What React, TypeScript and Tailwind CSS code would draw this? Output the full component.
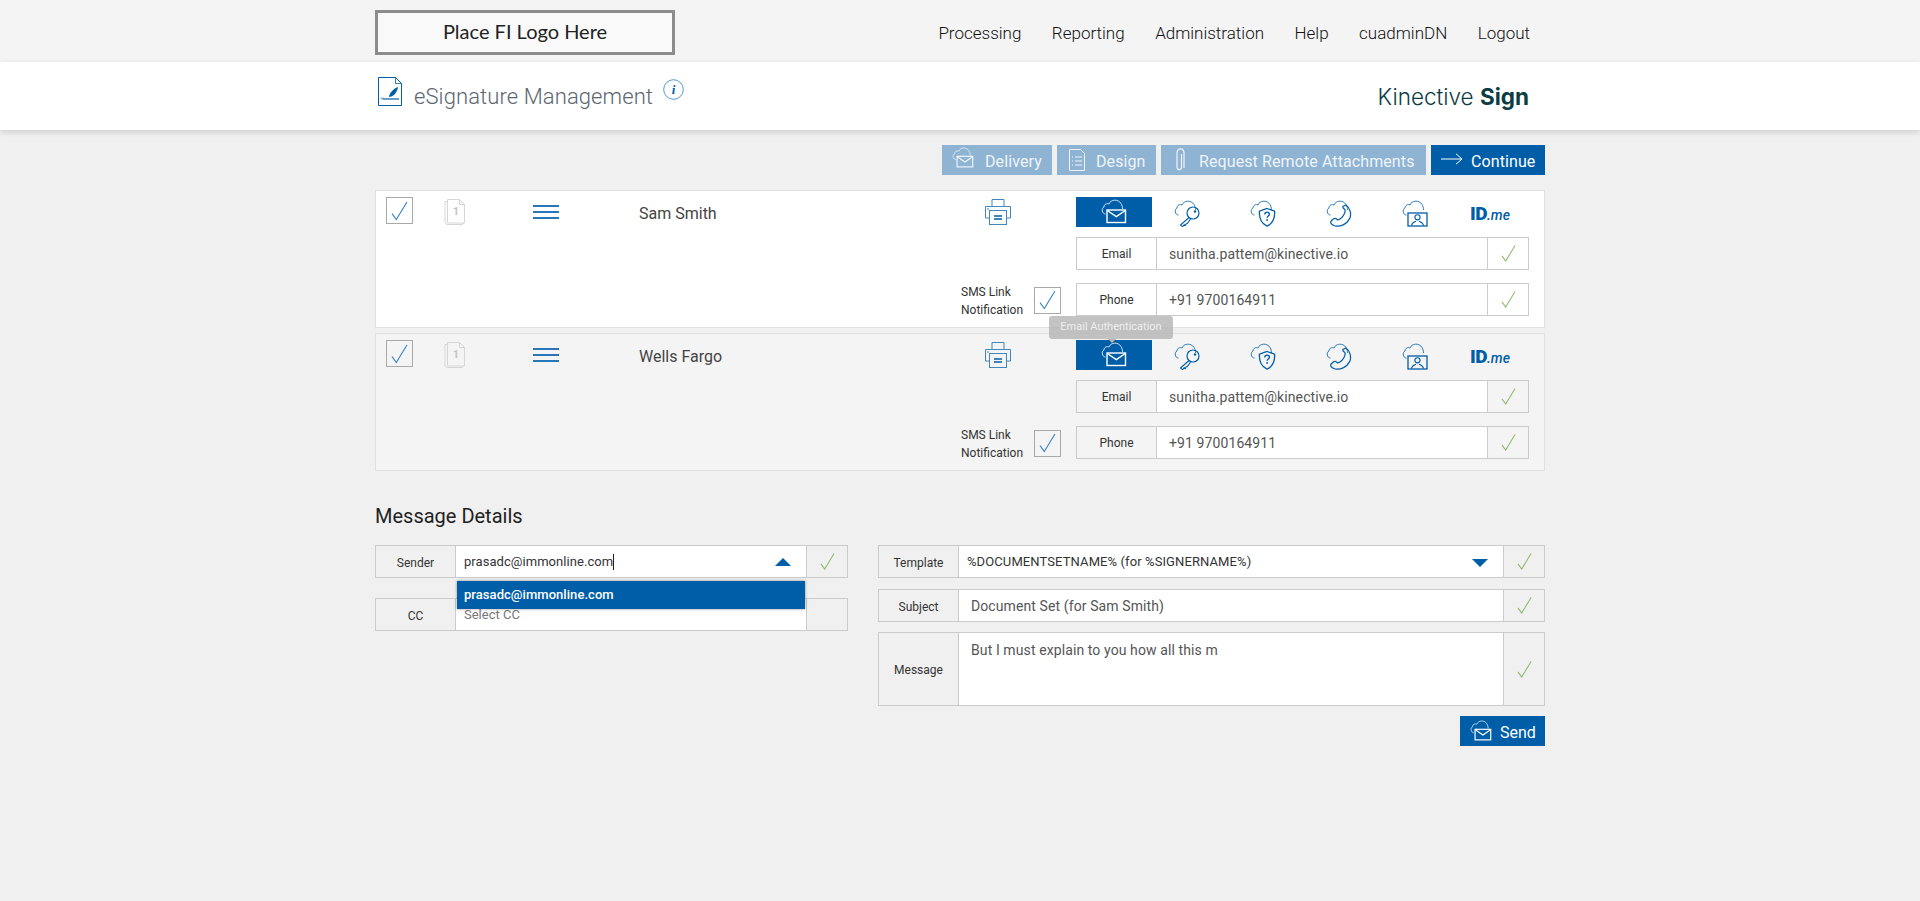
import React from "react";

const BLUE = "#005ea8";

const Cloud: React.FC<{ color: string }> = ({ color }) => (
  <path
    d="M4.500 15C1 15 0 9.500 3 8 3 5 6 4 8 5 9.500 .5 17-.5 20 4.500 21 6 21.500 8 21.500 10"
    fill="none"
    stroke={color}
    strokeWidth="1"
    opacity=".8"
  />
);

const MailIcon: React.FC<{ color?: string; className?: string }> = ({
  color = "#fff",
  className = "w-[26px] h-[26px]",
}) => (
  <svg viewBox="0 0 26 26" className={className} fill="none" stroke={color}>
    <Cloud color={color} />
    <rect x="6" y="11" width="18.500" height="12.500" strokeWidth="1.400" />
    <path d="M6.300 11.500l9 6.200 9-6.200" strokeWidth="1.400" />
  </svg>
);

const KeyIcon = () => (
  <svg viewBox="0 0 26 27" className="w-[26px] h-[27px]" fill="none" stroke={BLUE}>
    <Cloud color={BLUE} />
    <circle cx="19" cy="13" r="6" strokeWidth="1.200" />
    <circle cx="21" cy="11.500" r="1.200" fill={BLUE} stroke="none" />
    <path d="M15 17.500L6.500 25l2 1.600 1.800-1.800 1 .6 1-1.600 1-.2 4-5.600" strokeWidth="1.100" />
  </svg>
);

const ShieldIcon = () => (
  <svg viewBox="0 0 26 27" className="w-[26px] h-[27px]" fill="none" stroke={BLUE}>
    <Cloud color={BLUE} />
    <path d="M17 8.500l7.600 2.600c.4 6.600-1.800 12.400-7.600 15-5.800-2.600-8-8.400-7.600-15z" strokeWidth="1.300" />
    <path d="M14.800 14.400c0-3 4.600-3 4.600-.2 0 1.800-2.300 1.800-2.300 3.600" strokeWidth="1.400" />
    <circle cx="17.100" cy="20" r=".9" fill={BLUE} stroke="none" />
  </svg>
);

const PhoneIcon = () => (
  <svg viewBox="0 0 26 27" className="w-[26px] h-[27px]" fill="none" stroke={BLUE}>
    <Cloud color={BLUE} />
    <path
      d="M17 6.500l2.800-1.500c3.800 2.400 6.200 8.800 3.800 13.600-2.400 5-8.800 8.600-14.400 7.400-4-1-5.600-3.600-3.600-5.600l2-1.600c1.400-.8 2.800-.4 3.600 1 1.400.4 4.600-1.600 6.400-4.600 1.600-2.600 1.800-4.800 1-6-1.200-.4-2-1.400-1.600-3.300z"
      strokeWidth="1.250"
    />
  </svg>
);

const ScreenIcon = () => (
  <svg viewBox="0 0 26 27" className="w-[26px] h-[27px]" fill="none" stroke={BLUE}>
    <Cloud color={BLUE} />
    <rect x="6" y="13" width="19" height="13" strokeWidth="1.300" />
    <circle cx="15.500" cy="17.300" r="2.600" strokeWidth="1.100" />
    <path d="M9.600 25.600c0-3 2.600-3.400 4.400-4.400M21.400 25.600c0-3-2.600-3.400-4.400-4.400" strokeWidth="1.100" />
  </svg>
);

const PrinterIcon = () => (
  <svg viewBox="0 0 26 26" className="w-[26px] h-[26px]" fill="none" stroke="#3f86c2">
    <path d="M7 7V.5h12V7" />
    <path d="M4 19H.5V7.500h25V19H22" />
    <circle cx="3" cy="10" r=".7" fill={BLUE} stroke="none" />
    <rect x="4.500" y="11.500" width="17" height="14" />
    <path d="M9 17h8M9 20h8" stroke={BLUE} strokeWidth="1.300" />
  </svg>
);

const DocStackIcon = () => (
  <svg viewBox="0 0 22 26" className="w-[22px] h-[26px]" fill="none" stroke="#d6d6d6">
    <path d="M3 2.500H1v21.500l2 1.500h15l2-1.500" />
    <path d="M3.500.5h12l5 5v18.500h-17z" />
    <path d="M15.500.5v5h5" />
    <text
      x="12"
      y="16"
      textAnchor="middle"
      fontSize="11"
      fontWeight="700"
      fontFamily="Roboto, sans-serif"
      fill="#c4c4c4"
      stroke="none"
    >
      1
    </text>
  </svg>
);

const SignIcon = () => (
  <svg viewBox="0 0 24 29" className="w-[24px] h-[29px]" fill="none" stroke={BLUE}>
    <path d="M.5.5h17l6 6v22H.5z" />
    <path d="M17.500.5v6h6" strokeWidth=".8" />
    <path d="M11 20c.5-4 4-8 9-10-.5 4-3 8-6.500 9.500z" fill={BLUE} stroke="none" />
    <path d="M5 22h16" strokeWidth="1.200" />
    <path d="M3 20.500l2 2M5 20.500l-2 2" strokeWidth=".7" />
  </svg>
);

const InfoIcon = () => (
  <svg viewBox="0 0 21 21" className="w-[21px] h-[21px]" fill="none">
    <circle cx="10.500" cy="10.500" r="9.800" stroke="#4c97d2" />
    <text
      x="10.500"
      y="15"
      textAnchor="middle"
      fontSize="13"
      fontStyle="italic"
      fontWeight="700"
      fontFamily="Liberation Serif, serif"
      fill={BLUE}
    >
      i
    </text>
  </svg>
);

const Tick: React.FC<{ color?: string; className?: string }> = ({
  color = "#90b86b",
  className = "w-[15px] h-[17px]",
}) => (
  <svg viewBox="0 0 16 18" className={className} fill="none" stroke={color} strokeWidth="1.100">
    <path d="M1 11.500L5 17 15 .5" />
  </svg>
);

const CheckBox = () => (
  <div className="w-[27px] h-[27px] border border-[#a9a9a9] flex items-center justify-center shrink-0">
    <Tick color="#3d86c6" className="w-[17px] h-[20px]" />
  </div>
);

const Hamburger = () => (
  <div className="w-[26px] flex flex-col gap-[4px]">
    <span className="h-[2px] bg-[#2a77b8]" />
    <span className="h-[2px] bg-[#2a77b8]" />
    <span className="h-[2px] bg-[#2a77b8]" />
  </div>
);

interface FieldProps {
  label: string;
  labelClass?: string;
  height?: string;
  checked?: boolean;
  children?: React.ReactNode;
  className?: string;
}

const Field: React.FC<FieldProps> = ({
  label,
  labelClass = "pt-[1px]",
  height = "h-[33px]",
  checked = true,
  children,
  className = "",
}) => (
  <div className={`flex border border-[#cbcbcb] ${height} ${className}`}>
    <div className={`w-[79px] shrink-0 flex items-center justify-center text-[12px] text-[#333] ${labelClass}`}>
      {label}
    </div>
    <div className="relative flex-1 flex bg-white border-x border-[#cbcbcb] text-[14px] tracking-[0.1px] text-[#555]">
      {children}
    </div>
    <div className="w-[40px] shrink-0 flex items-center justify-center">
      {checked && <Tick />}
    </div>
  </div>
);

const Tooltip = () => (
  <div className="absolute left-[-27px] top-[-24px] z-10 w-[124px] h-[23px] rounded-[3px] bg-[#b4b4b4]/80 flex items-center justify-center text-[11px] text-[#eeeeee] whitespace-nowrap">
    Email Authentication
    <span className="absolute left-[59px] bottom-[-4px] w-0 h-0 border-x-[4px] border-x-transparent border-t-[4px] border-t-[#b4b4b4]" />
  </div>
);

const SignerCard: React.FC<{ name: string; shaded?: boolean; tooltip?: boolean; className?: string }> = ({
  name,
  shaded,
  tooltip,
  className = "",
}) => (
  <div
    className={`flex h-[138px] border border-[#e0e0e0] pl-[10px] pr-[15px] pt-[6px] ${
      shaded ? "bg-[#f4f4f4]" : "bg-white"
    } ${className}`}
  >
    <div className="flex-1 flex flex-col justify-between pb-[8px]">
      <div className="flex items-start">
        <CheckBox />
        <div className="ml-[31px] mt-[2px]">
          <DocStackIcon />
        </div>
        <div className="ml-[67px] mt-[8px]">
          <Hamburger />
        </div>
        <div className="ml-[80px] mt-[5px] text-[16px] text-[#444]">{name}</div>
        <div className="ml-auto mr-[65px] mt-[2px]">
          <PrinterIcon />
        </div>
      </div>
      <div className="flex items-center self-end mr-[15px]">
        <div className="w-[73px] mt-[2px] text-[12px] leading-[18px] text-[#333]">
          SMS Link
          <br />
          Notification
        </div>
        <CheckBox />
      </div>
    </div>
    <div className="w-[453px] shrink-0">
      <div className="flex items-start h-[30px]">
        <div className="relative w-[76px] h-[30px] bg-[#005ea8] flex items-center justify-center">
          <MailIcon />
          {tooltip && <Tooltip />}
        </div>
        <div className="flex items-start pt-[3px] ml-[22px] gap-[50px]">
          <KeyIcon />
          <ShieldIcon />
          <PhoneIcon />
          <ScreenIcon />
          <div className="w-[24px] h-[27px] flex items-center justify-center whitespace-nowrap text-[#005ea8] leading-none">
            <span className="text-[19px] font-black tracking-[-0.5px]">ID</span>
            <span className="text-[14px] font-medium italic pt-[3px]">.me</span>
          </div>
        </div>
      </div>
      <Field label="Email" className="mt-[10px]">
        <span className="self-center pl-[12px] pt-[1px]">sunitha.pattem@kinective.io</span>
      </Field>
      <Field label="Phone" className="mt-[13px]">
        <span className="self-center pl-[12px] pt-[1px]">+91 9700164911</span>
      </Field>
    </div>
  </div>
);

interface ActionButtonProps {
  label: string;
  icon: React.ReactNode;
  className: string;
  active?: boolean;
}

const ActionButton: React.FC<ActionButtonProps> = ({ label, icon, className, active }) => (
  <button
    className={`flex items-center h-[30px] text-[16px] tracking-[0.1px] ${className} ${
      active ? "bg-[#005ea8] text-white" : "bg-[#8fb3d2] text-[#eef4f9]"
    }`}
  >
    {icon}
    <span className="pt-[4px]">{label}</span>
  </button>
);

const DesignIcon = () => (
  <svg viewBox="0 0 16 22" className="w-[16px] h-[22px]" fill="none" stroke="#eef4f9">
    <path d="M.5.5h11l4 4v17H.5z" />
    <path d="M6 8h7M6 12h7M6 16h7M3 8h1M3 12h1M3 16h1" />
  </svg>
);

const ClipIcon = () => (
  <svg viewBox="0 0 9 24" className="w-[9px] h-[24px]" fill="none" stroke="#eef4f9" strokeWidth="1.200">
    <path d="M5.500 6v13c0 3.500-4.500 3.500-4.500 0V5c0-5.500 7-5.500 7 0v15" />
  </svg>
);

const ArrowIcon = () => (
  <svg viewBox="0 0 22 12" className="w-[22px] h-[12px] mb-[2px]" fill="none" stroke="#fff">
    <path d="M0 6h21M15 .8L21 6l-6 5.200" />
  </svg>
);

export default function App() {
  return (
    <div className="min-h-screen bg-[#f0f0f0] font-['Roboto',sans-serif]">
      <div className="bg-[#f4f4f4] h-[62px]">
        <div className="w-[1170px] mx-auto h-full flex items-start justify-between">
          <div className="mt-[10px] w-[300px] h-[45px] border-[3px] border-[#8c8c8c] bg-[#f9f9f9] flex items-center justify-center pb-[3px] font-['Lato',sans-serif] text-[20px] text-[#222]">
            Place FI Logo Here
          </div>
          <nav className="flex gap-[30.5px] pr-[15px] pt-[23px] text-[17px] leading-[20px] font-light text-[#111]">
            <a>Processing</a>
            <a>Reporting</a>
            <a>Administration</a>
            <a>Help</a>
            <a>cuadminDN</a>
            <a>Logout</a>
          </nav>
        </div>
      </div>

      <div className="bg-white h-[68px] shadow-[0_2px_6px_rgba(0,0,0,0.15)]">
        <div className="w-[1170px] mx-auto h-full flex items-start justify-between">
          <div className="flex items-start pl-[3px] pt-[15px]">
            <SignIcon />
            <h1 className="ml-[12px] mt-[6px] text-[22px] leading-[28px] tracking-[0.1px] font-light text-[#5c6670]">
              eSignature Management
            </h1>
            <div className="ml-[10px] mt-[2px]">
              <InfoIcon />
            </div>
          </div>
          <div className="pr-[16px] pt-[21px] font-['Inter',sans-serif] text-[22.500px] leading-[28px] font-light text-[#0c3c44]">
            Kinective <span className="font-bold">Sign</span>
          </div>
        </div>
      </div>

      <main className="w-[1170px] mx-auto">
        <div className="flex justify-end gap-[5px] mt-[15px]">
          <ActionButton
            label="Delivery"
            icon={<MailIcon color="#eef4f9" className="w-[22px] h-[22px] mr-[11px] mb-[4px]" />}
            className="pl-[10px] w-[110px]"
          />
          <ActionButton
            label="Design"
            icon={<DesignIcon />}
            className="pl-[12px] w-[99px] gap-[11px]"
          />
          <ActionButton
            label="Request Remote Attachments"
            icon={<ClipIcon />}
            className="pl-[15px] w-[265px] gap-[14px]"
          />
          <ActionButton
            label="Continue"
            icon={<ArrowIcon />}
            className="pl-[10px] w-[114px] gap-[8px]"
            active
          />
        </div>

        <SignerCard name="Sam Smith" className="mt-[15px]" />
        <SignerCard name="Wells Fargo" shaded tooltip className="mt-[5px]" />

        <h2 className="mt-[33px] text-[20px] leading-[24px] text-[#222]">Message Details</h2>

        <div className="flex gap-[30px] mt-[17px]">
          <div className="w-[473px]">
            <Field label="Sender" labelClass="pt-[3px]">
              <span className="self-center pl-[8px] text-[13px] tracking-[0.05px] text-[#333] border-r border-[#222] leading-[16px]">
                prasadc@immonline.com
              </span>
              <svg viewBox="0 0 16 8" className="absolute right-[15px] top-[12px] w-[16px] h-[8px]">
                <polygon points="0,8 16,8 8,0" fill="#005ea8" />
              </svg>
              <div className="absolute z-10 left-[1px] right-[1px] top-[35px] h-[28px] bg-[#005ea8] pl-[7px] flex items-center text-[13px] tracking-[0.05px] font-medium text-white shadow-[0_0_3px_rgba(0,0,0,0.4)]">
                prasadc@immonline.com
              </div>
            </Field>
            <Field label="CC" labelClass="pt-[3px]" checked={false} className="mt-[20px]">
              <span className="self-center pl-[8px] text-[13px] tracking-normal text-[#777]">Select CC</span>
            </Field>
          </div>

          <div className="flex-1">
            <Field label="Template" labelClass="pt-[3px]">
              <span className="self-center pl-[8px] text-[13px] text-[#333]">
                %DOCUMENTSETNAME% (for %SIGNERNAME%)
              </span>
              <svg viewBox="0 0 16 8" className="absolute right-[15px] top-[13px] w-[16px] h-[8px]">
                <polygon points="0,0 16,0 8,8" fill="#005ea8" />
              </svg>
            </Field>
            <Field label="Subject" labelClass="pt-[3px]" className="mt-[11px]">
              <span className="self-center pl-[12px] pt-[1px]">Document Set (for Sam Smith)</span>
            </Field>
            <Field label="Message" height="h-[74px]" className="mt-[10px]">
              <span className="pl-[12px] pt-[7px]">But I must explain to you how all this m</span>
            </Field>
            <div className="flex justify-end mt-[10px]">
              <button className="flex items-center gap-[8px] w-[85px] h-[30px] bg-[#005ea8] pl-[10px] text-[16px] text-white">
                <MailIcon className="w-[22px] h-[22px]" />
                <span className="pt-[4px]">Send</span>
              </button>
            </div>
          </div>
        </div>
      </main>
    </div>
  );
}
